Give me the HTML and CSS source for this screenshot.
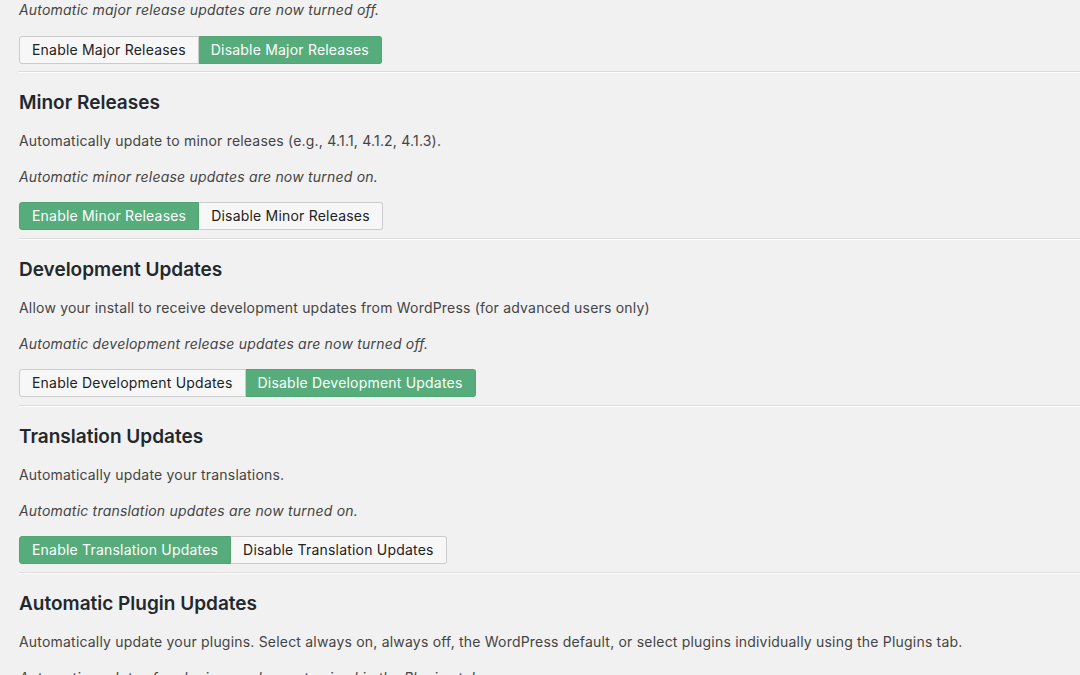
FILE: index.html
```html
<!DOCTYPE html>
<html>
<head>
<meta charset="utf-8">
<link rel="stylesheet" href="styles.css">
</head>
<body>
<div class="page">
  <section class="section first">
    <p class="status">Automatic major release updates are now turned off.</p>
    <div class="toggle">
      <span class="btn">Enable Major Releases</span><span class="btn on">Disable Major Releases</span>
    </div>
  </section>
  <section class="section">
    <h2>Minor Releases</h2>
    <p class="desc">Automatically update to minor releases (e.g., 4.1.1, 4.1.2, 4.1.3).</p>
    <p class="status">Automatic minor release updates are now turned on.</p>
    <div class="toggle">
      <span class="btn on">Enable Minor Releases</span><span class="btn">Disable Minor Releases</span>
    </div>
  </section>
  <section class="section">
    <h2>Development Updates</h2>
    <p class="desc">Allow your install to receive development updates from WordPress (for advanced users only)</p>
    <p class="status">Automatic development release updates are now turned off.</p>
    <div class="toggle">
      <span class="btn">Enable Development Updates</span><span class="btn on">Disable Development Updates</span>
    </div>
  </section>
  <section class="section">
    <h2>Translation Updates</h2>
    <p class="desc">Automatically update your translations.</p>
    <p class="status">Automatic translation updates are now turned on.</p>
    <div class="toggle">
      <span class="btn on">Enable Translation Updates</span><span class="btn">Disable Translation Updates</span>
    </div>
  </section>
  <section class="section last">
    <h2>Automatic Plugin Updates</h2>
    <p class="desc">Automatically update your plugins. Select always on, always off, the WordPress default, or select plugins individually using the Plugins tab.</p>
    <p class="status">Automatic updates for plugins can be customized in the Plugins tab.</p>
  </section>
</div>
</body>
</html>
```
FILE: styles.css
```css
html, body {
  margin: 0;
  padding: 0;
  background: #f1f1f1;
}
body {
  font-family: "Inter", "Liberation Sans", sans-serif;
  color: #444;
  overflow: hidden;
  height: 675px;
}
.page {
  padding-left: 19px;
}
.section {
  padding: 18px 0 8px;
  border-top: 1px solid #fff;
  border-bottom: 1px solid #dcdcdc;
}
.section.first {
  padding-top: 0;
  border-top: 0;
  padding-bottom: 7px;
}
.section.last {
  border-bottom: 0;
}
h2 {
  margin: 0;
  font-size: 19px;
  line-height: 24px;
  font-weight: 600;
  color: #23282d;
}
p {
  margin: 16px 0 0;
  font-size: 14px;
  line-height: 20px;
  letter-spacing: 0.2px;
}
.section.first p.status {
  margin-top: 0;
}
.desc {
  color: #444;
}
.status {
  font-style: italic;
  color: #444;
}
.toggle {
  display: flex;
  margin-top: 15px;
}
.section.first .toggle {
  margin-top: 16px;
}
.btn {
  display: inline-block;
  height: 28px;
  box-sizing: border-box;
  padding: 0 12px;
  font-size: 14px;
  line-height: 26px;
  letter-spacing: 0.2px;
  color: #222;
  background: #f7f7f7;
  border: 1px solid #ccc;
}
.btn:first-child {
  border-radius: 3px 0 0 3px;
}
.btn:last-child {
  border-radius: 0 3px 3px 0;
  border-left: 0;
}
.btn.on {
  background: #56ad7b;
  border-color: #50a574;
  color: #fff;
}
```
